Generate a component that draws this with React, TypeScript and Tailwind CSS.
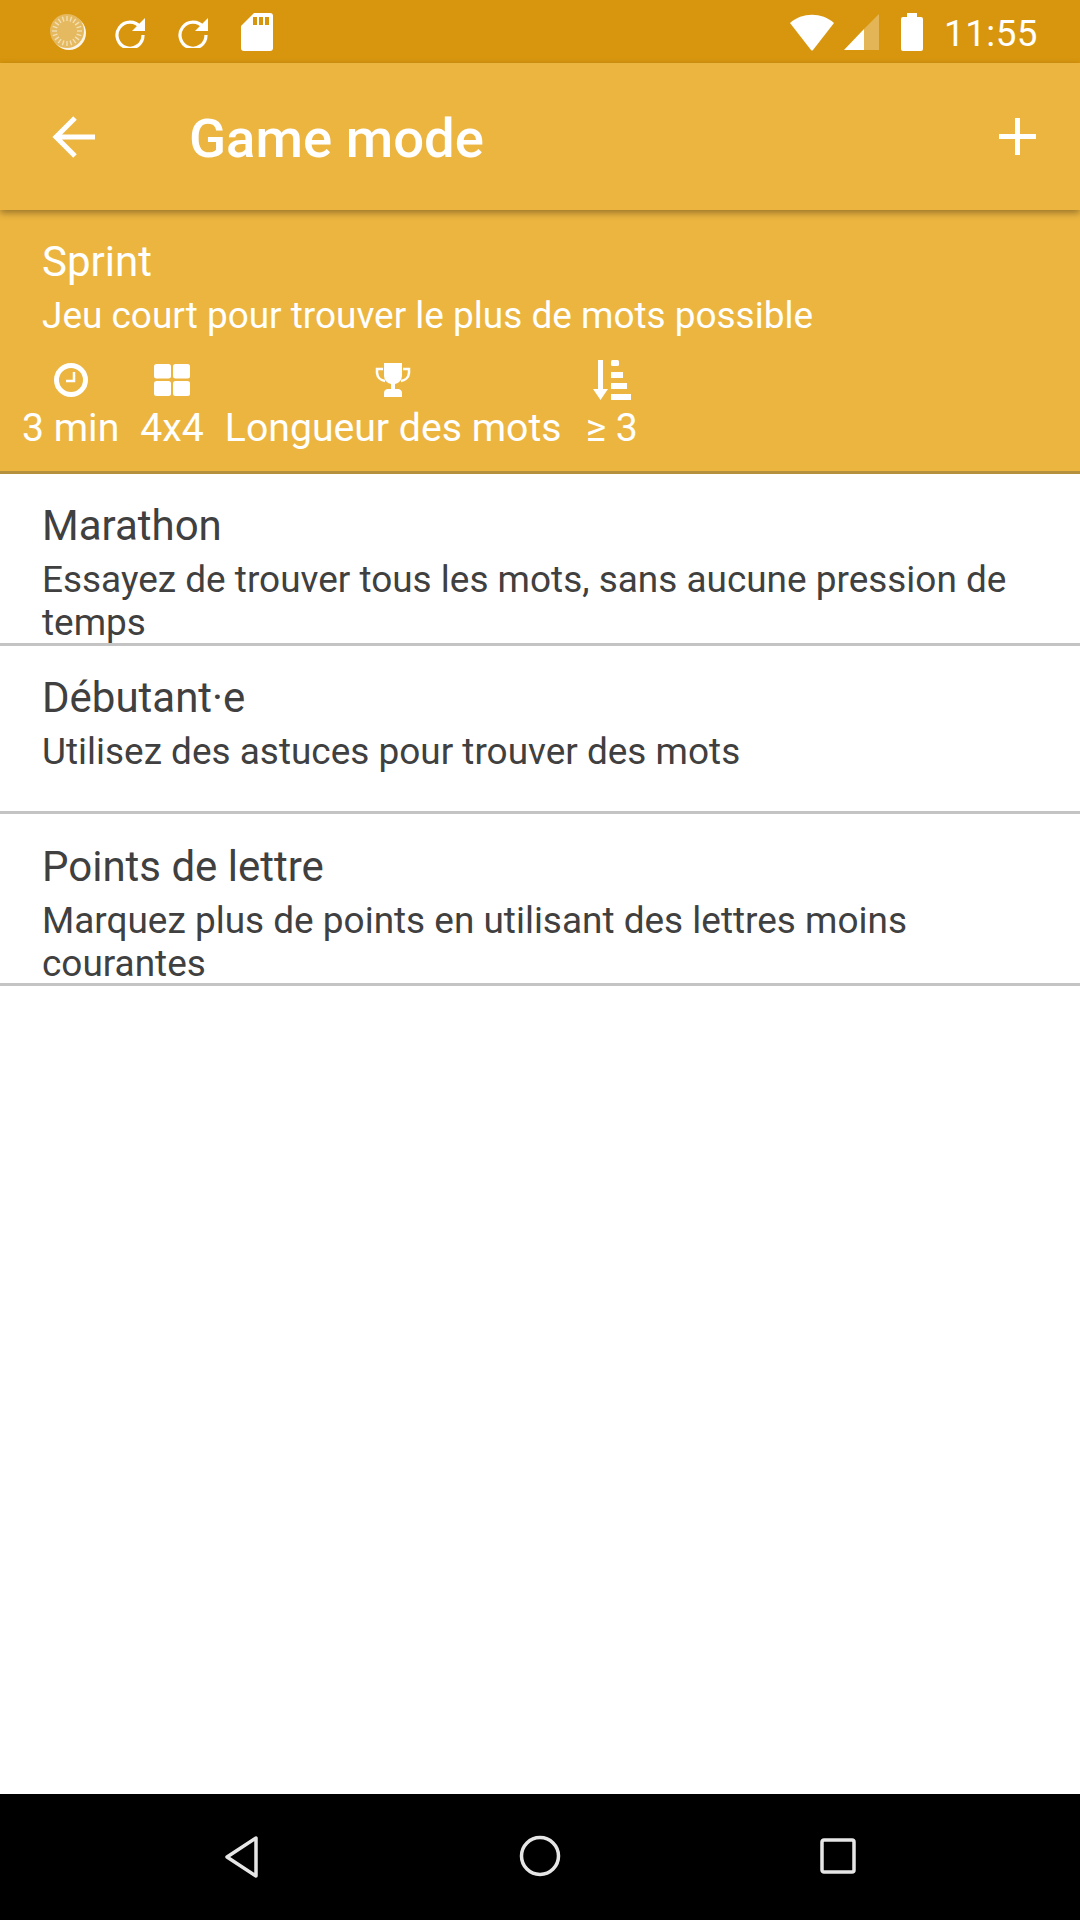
import React from "react";

const Spinner = () => (
  <svg width="38" height="38" viewBox="0 0 38 38" className="mt-[1px]">
    <circle cx="20" cy="20" r="17" fill="#fff" opacity="0.9" />
    <circle cx="18" cy="18" r="17" fill="#e5b95f" />
    {Array.from({ length: 20 }).map((_, i) => (
      <line key={i} x1="18" y1="3" x2="18" y2="8" stroke="#f3dfb2" strokeWidth="1.4" transform={`rotate(${i * 18} 18 18)`} />
    ))}
  </svg>
);

const Refresh = () => (
  <svg width="32" height="32" viewBox="0 0 32 32">
    <path d="M25.5 11.5A13 13 0 1 0 28 19" fill="none" stroke="#fff" strokeWidth="3.2" />
    <path d="M30 2v13H17z" fill="#fff" />
  </svg>
);

const Sd = () => (
  <svg width="32" height="38" viewBox="0 0 32 38">
    <path d="M13 0h16a3 3 0 0 1 3 3v32a3 3 0 0 1-3 3H3a3 3 0 0 1-3-3V13z" fill="#fff" />
    <rect x="12" y="4" width="4" height="8" fill="#d8960e" />
    <rect x="18" y="4" width="4" height="8" fill="#d8960e" />
    <rect x="24" y="4" width="4" height="8" fill="#d8960e" />
  </svg>
);

const Row = ({ title, desc, h, pt }: { title: string; desc: string; h: string; pt: string }) => (
  <div className={`${h} ${pt} border-b-[3px] border-[#c4c4c4] pl-[42px] pr-[40px] text-[#404040] overflow-hidden`}>
    <div className="text-[42px] leading-[48px]">{title}</div>
    <div className="text-[36.95px] leading-[43px] mt-[8px]">{desc}</div>
  </div>
);

const Stat = ({ icon, label, cls = "" }: { icon: React.ReactNode; label: string; cls?: string }) => (
  <div className={`flex flex-col items-center ${cls}`}>
    <div className="h-[40px] flex items-center justify-center">{icon}</div>
    <div className="text-[39.2px] leading-[46px] mt-[5px]">{label}</div>
  </div>
);

export default function App() {
  return (
    <div className="w-[1080px] h-[1920px] bg-white flex flex-col overflow-hidden text-white font-['Roboto',sans-serif]">
      <div className="h-[63px] bg-[#d8960e] flex items-center pl-[49px] pr-[42px] shrink-0">
        <Spinner />
        <div className="ml-[28px]"><Refresh /></div>
        <div className="ml-[31px]"><Refresh /></div>
        <div className="ml-[31px]"><Sd /></div>
        <div className="ml-auto flex items-center">
          <svg width="46" height="38" viewBox="0 0 46 38">
            <path d="M1 10C13 -1 33 -1 45 10L24 37q-1 1-2 0z" fill="#fff" />
          </svg>
          <svg width="36" height="36" viewBox="0 0 36 36" className="ml-[9px]">
            <path d="M35 0v36H20V15z" fill="#fff" opacity="0.3" />
            <path d="M20 15v21H0z" fill="#fff" />
          </svg>
          <svg width="22" height="38" viewBox="0 0 22 38" className="ml-[21px]">
            <path d="M6 0h10v4h4a2 2 0 0 1 2 2v30a2 2 0 0 1-2 2H2a2 2 0 0 1-2-2V6a2 2 0 0 1 2-2h4z" fill="#fff" />
          </svg>
          <div className="ml-[21px] text-[36.75px] leading-none tracking-[0.5px] w-[94px] pt-[6px]">11:55</div>
        </div>
      </div>

      <div className="h-[147px] bg-[#ecb540] flex items-center shrink-0 relative z-10 shadow-[0_3px_7px_rgba(0,0,0,0.35)]">
        <svg width="44" height="42" viewBox="0 0 44 42" className="ml-[52px]">
          <path d="M43 21H4M23 2 4 21l19 19" fill="none" stroke="#fff" strokeWidth="5" />
        </svg>
        <div className="ml-[93px] text-[54.5px] font-medium leading-none pt-[4px]">Game mode</div>
        <svg width="37" height="37" viewBox="0 0 37 37" className="ml-auto mr-[44px]">
          <path d="M18.500 0v37M0 18.500h37" stroke="#fff" strokeWidth="5" />
        </svg>
      </div>

      <div className="h-[264px] bg-[#ecb540] border-b-[3px] border-[#b6913d] pt-[28px] shrink-0">
        <div className="pl-[42px] text-[42px] leading-[48px]">Sprint</div>
        <div className="pl-[42px] text-[36.95px] leading-[43px] mt-[8px]">Jeu court pour trouver le plus de mots possible</div>
        <div className="flex pl-[22px] gap-[21px] mt-[23px]">
          <Stat
            label="3 min"
            icon={
              <svg width="34" height="34" viewBox="0 0 34 34">
                <circle cx="17" cy="17" r="14.5" fill="none" stroke="#fff" strokeWidth="5" />
                <path d="M20 9v9h-8" fill="none" stroke="#fff" strokeWidth="2.5" />
              </svg>
            }
          />
          <Stat
            label="4x4"
            icon={
              <svg width="36" height="32" viewBox="0 0 36 32">
                <rect x="0" y="0" width="17" height="14.500" rx="2.500" fill="#fff" />
                <rect x="19" y="0" width="17" height="14.500" rx="2.500" fill="#fff" />
                <rect x="0" y="17" width="17" height="15" rx="2.500" fill="#fff" />
                <rect x="19" y="17" width="17" height="15" rx="2.500" fill="#fff" />
              </svg>
            }
          />
          <Stat
            label="Longueur des mots"
            icon={
              <svg width="36" height="34" viewBox="0 0 36 34">
                <path d="M9 0h18v13a9 9 0 0 1-7 8v5h4q3 1 3 4v4H9v-4q0-3 3-4h4v-5a9 9 0 0 1-7-8z" fill="#fff" />
                <path d="M8 6H2v4a9 9 0 0 0 8 8M28 6h6v4a9 9 0 0 1-8 8" fill="none" stroke="#fff" strokeWidth="2.500" />
              </svg>
            }
          />
          <Stat
            label="≥ 3"
            cls="ml-[3px]"
            icon={
              <svg width="38" height="40" viewBox="0 0 38 40">
                <path d="M5 0h5v29h5L7.500 40 0 29h5z" fill="#fff" />
                <rect x="18" y="0" width="8" height="6" rx="1.500" fill="#fff" />
                <rect x="18" y="12" width="12" height="6" fill="#fff" />
                <rect x="18" y="23" width="16" height="6" fill="#fff" />
                <rect x="18" y="34" width="20" height="6" fill="#fff" />
              </svg>
            }
          />
        </div>
      </div>

      <Row h="h-[172px]" pt="pt-[28px]" title="Marathon" desc="Essayez de trouver tous les mots, sans aucune pression de temps" />
      <Row h="h-[168px]" pt="pt-[28px]" title="Débutant·e" desc="Utilisez des astuces pour trouver des mots" />
      <Row h="h-[172px]" pt="pt-[29px]" title="Points de lettre" desc="Marquez plus de points en utilisant des lettres moins courantes" />

      <div className="flex-1" />

      <div className="h-[126px] bg-black flex items-center justify-center relative shrink-0">
        <svg width="36" height="42" viewBox="0 0 36 42" className="absolute left-[224px] top-[42px]">
          <path d="M32 2v38L3 21z" fill="none" stroke="#e6e6e6" strokeWidth="3.500" strokeLinejoin="round" />
        </svg>
        <svg width="42" height="42" viewBox="0 0 42 42" className="absolute left-[519px] top-[41px]">
          <circle cx="21" cy="21" r="18.500" fill="none" stroke="#e6e6e6" strokeWidth="3.500" />
        </svg>
        <svg width="36" height="36" viewBox="0 0 36 36" className="absolute left-[820px] top-[44px]">
          <rect x="2" y="2" width="32" height="32" rx="2" fill="none" stroke="#e6e6e6" strokeWidth="3.500" />
        </svg>
      </div>
    </div>
  );
}
